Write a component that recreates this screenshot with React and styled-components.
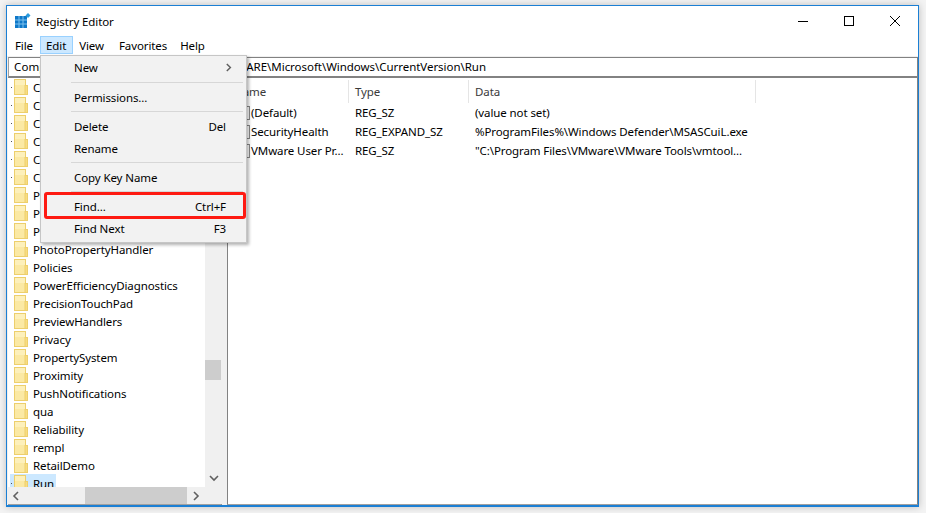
import React from "react";
import styled, { createGlobalStyle } from "styled-components";

const Global = createGlobalStyle`
  html, body { margin: 0; padding: 0; width: 926px; height: 513px; overflow: hidden; background: #f3f3f3; }
  #root { width: 926px; height: 513px; }
  * { box-sizing: border-box; }
`;

const Stage = styled.div`
  width: 926px;
  height: 513px;
  padding: 5px 7px 6px 6px;
  font-family: "Noto Sans", "Open Sans", sans-serif;
  font-size: 11.5px;
  letter-spacing: -0.1px;
  color: #000;
`;

const Win = styled.div`
  position: relative;
  width: 100%;
  height: 100%;
  display: flex;
  flex-direction: column;
  background: #fff;
  border: 1px solid #1b7fd4;
  border-bottom-width: 2px;
  box-shadow: 0 0 7px rgba(0,0,0,.22);
`;

const TitleBar = styled.div`
  height: 30px;
  flex: none;
  display: flex;
  align-items: center;
  padding-left: 8px;
`;

const TitleText = styled.span`
  margin-left: 5px;
`;

const WinButtons = styled.div`
  margin-left: auto;
  display: flex;
  align-items: center;
`;

const WinButton = styled.div`
  width: 46px;
  height: 30px;
  display: flex;
  align-items: center;
  justify-content: center;
`;

const MenuBar = styled.div`
  height: 19px;
  flex: none;
  display: flex;
  padding-left: 1.5px;
`;

const MenuItem = styled.div`
  height: 18px;
  padding: 0 6.5px;
  margin-left: ${p => p.$gap || 0}px;
  display: flex;
  align-items: center;
  background: ${p => (p.$active ? "#cce8ff" : "transparent")};
  outline: ${p => (p.$active ? "1px solid #99d1ff" : "none")};
  outline-offset: -1px;
`;

const AddressBar = styled.div`
  height: 22px;
  flex: none;
  margin-top: 1px;
  background: #f0f0f0;
  padding-top: 1px;
  display: flex;
`;

const AddressField = styled.div`
  flex: 1;
  margin-left: 1px;
  background: #fff;
  border: 1px solid #828282;
  border-width: 1px 1px 2px 1px;
  border-left-color: #a0a0a0;
  padding-left: 5px;
  line-height: 17px;
  white-space: nowrap;
  overflow: hidden;
  letter-spacing: -0.04px;
`;

const AddressHead = styled.span`
  letter-spacing: 0.13px;
`;

const Panes = styled.div`
  flex: 1;
  min-height: 0;
  display: flex;
  background: #f0f0f0;
  padding-left: 1px;
`;

const TreePane = styled.div`
  width: 214px;
  flex: none;
  display: grid;
  grid-template-columns: 197px 17px;
  grid-template-rows: 1fr 17px;
  border-right: 1px solid #828282;
  border-bottom: 1px solid #a0a0a0;
  background: #f0f0f0;
`;

const TreeList = styled.div`
  background: #fff;
  overflow: hidden;
  padding: 0 0 0 2px;
`;

const TreeRow = styled.div`
  height: 18px;
  display: flex;
  align-items: center;
  position: relative;
  white-space: nowrap;
`;

const Dot = styled.i`
  position: absolute;
  left: 1px;
  top: 9px;
  width: 1px;
  height: 1px;
  background: #555;
`;

const TreeLabel = styled.span`
  margin-left: 5px;
`;

const RowWrap = styled.div`
  display: flex;
  align-items: center;
  height: 18px;
  padding-left: 4px;
  padding-right: 2px;
  background: ${p => (p.$selected ? "#cce8ff" : "transparent")};
`;

const VBar = styled.div`
  background: #f0f0f0;
  display: flex;
  flex-direction: column;
  position: relative;
`;

const VThumb = styled.div`
  position: absolute;
  left: 0;
  right: 1px;
  top: 282px;
  height: 20px;
  background: #cdcdcd;
`;

const ArrowSlot = styled.div`
  width: 17px;
  height: 17px;
  display: flex;
  align-items: center;
  justify-content: center;
  margin-top: ${p => (p.$end ? "auto" : 0)};
  margin-left: ${p => (p.$end ? "auto" : 0)};
`;

const HBar = styled.div`
  background: #f0f0f0;
  display: flex;
  position: relative;
`;

const HThumb = styled.div`
  position: absolute;
  left: 77px;
  top: 0;
  bottom: 0;
  width: 102px;
  background: #cdcdcd;
`;

const Corner = styled.div`
  background: #f0f0f0;
`;

const Splitter = styled.div`
  width: 5px;
  flex: none;
`;

const ListPane = styled.div`
  flex: 1;
  background: #fff;
  border-left: 1px solid #828282;
  border-bottom: 1px solid #a0a0a0;
  border-right: 1px solid #828282;
`;

const ListGrid = styled.div`
  display: grid;
  grid-template-columns: 121px 120px 287px;
  padding-top: 2px;
`;

const HeadCell = styled.div`
  height: 23px;
  padding-left: 6px;
  display: flex;
  align-items: center;
  border-right: 1px solid #e5e5e5;
  color: #3a3a3a;
`;

const ListRow = styled.div`
  display: grid;
  grid-column: 1 / -1;
  grid-template-columns: subgrid;
  height: 19px;
  align-items: center;
  white-space: nowrap;
`;

const Cell = styled.div`
  padding-left: 6px;
  display: flex;
  align-items: center;
  overflow: hidden;
`;

const NameCell = styled(Cell)`
  gap: 1px;
`;

const Menu = styled.div`
  position: absolute;
  left: 33px;
  top: 49px;
  width: 207px;
  height: 188px;
  background: #f2f2f2;
  border: 1px solid #c6c6c6;
  box-shadow: 2px 2px 3px rgba(0,0,0,.3);
  padding: 0 2px;
  z-index: 5;
`;

const MenuRow = styled.div`
  height: 22px;
  display: flex;
  align-items: center;
  padding-left: 31px;
  padding-right: ${p => p.$pr || 18}px;
  justify-content: space-between;
`;

const Sep = styled.div`
  height: 1px;
  margin: ${p => p.$m || "3px 1px 3px 28px"};
  background: #d7d7d7;
`;

const FindBox = styled.div`
  position: absolute;
  left: 3px;
  top: 136px;
  width: 202px;
  height: 27px;
  border: 3px solid #fe1a12;
  border-radius: 3px;
  pointer-events: none;
`;

const AppIcon = () => (
  <svg width="16" height="16" viewBox="0 0 16 16" style={{ flex: "none" }}>
    <rect x="0" y="3" width="12" height="12" fill="#0f78c8" />
    <path d="M4 3v12M8 3v12M0 7h12M0 11h12" stroke="#7cc1ee" strokeWidth="1" />
    <path d="M13 0l2.5 2.5L13 5l-2.5-2.5z" fill="#2b9bdd" />
  </svg>
);

const Folder = () => (
  <svg width="14" height="17" viewBox="0 0 14 17" style={{ flex: "none" }}>
    <rect x="0.5" y="0.5" width="11" height="15" fill="#fbe9a4" stroke="#edcf6c" />
    <rect x="11" y="6.5" width="2.5" height="9" fill="#f8dd83" stroke="#edcf6c" />
    <rect x="1" y="1" width="10" height="5" fill="#fdf0bb" />
  </svg>
);

const ValueIcon = () => (
  <svg width="16" height="16" viewBox="0 0 16 16" style={{ flex: "none" }}>
    <rect x="2.5" y="1.5" width="13" height="13" fill="#fff" stroke="#8a8a8a" />
    <text x="4" y="11" fontSize="7" fontFamily="Liberation Sans" fill="#c33">ab</text>
  </svg>
);

const Chevron = ({ dir, size = 10 }) => {
  const d = { up: "M1 6l4-4 4 4", down: "M1 2l4 4 4-4", left: "M6 1L2 5l4 4", right: "M2 1l4 4-4 4" }[dir];
  return (
    <svg width={size} height={size} viewBox="0 0 10 10">
      <path d={d} fill="none" stroke="#606060" strokeWidth="1.6" />
    </svg>
  );
};

const tree = [
  ["Component Based Servicing", 1], ["Control Panel", 1], ["Controls Folder", 1], ["CSC", 1], ["CloudStore", 1], ["Communications", 1],
  ["Parental Controls", 0], ["PerceptionSimulation", 0], ["Personalization", 0],
  ["PhotoPropertyHandler", 0], ["Policies", 0], ["PowerEfficiencyDiagnostics", 0], ["PrecisionTouchPad", 0], ["PreviewHandlers", 0],
  ["Privacy", 0], ["PropertySystem", 0], ["Proximity", 0], ["PushNotifications", 0], ["qua", 0], ["Reliability", 0], ["rempl", 0], ["RetailDemo", 0], ["Run", 1],
];

const values = [
  ["(Default)", "REG_SZ", "(value not set)"],
  ["SecurityHealth", "REG_EXPAND_SZ", "%ProgramFiles%\\Windows Defender\\MSASCuiL.exe"],
  ["VMware User Pr...", "REG_SZ", "\"C:\\Program Files\\VMware\\VMware Tools\\vmtool..."],
];

export default function App() {
  return (
    <Stage>
      <Global />
      <Win>
        <TitleBar>
          <AppIcon />
          <TitleText>Registry Editor</TitleText>
          <WinButtons>
            <WinButton>
              <svg width="10" height="10" viewBox="0 0 10 10"><path d="M0 5.5h10" stroke="#000" /></svg>
            </WinButton>
            <WinButton>
              <svg width="10" height="10" viewBox="0 0 10 10"><rect x=".5" y=".5" width="9" height="9" fill="none" stroke="#000" /></svg>
            </WinButton>
            <WinButton>
              <svg width="10" height="10" viewBox="0 0 10 10"><path d="M0 0l10 10M10 0L0 10" stroke="#000" /></svg>
            </WinButton>
          </WinButtons>
        </TitleBar>
        <MenuBar>
          <MenuItem>File</MenuItem>
          <MenuItem $active>Edit</MenuItem>
          <MenuItem>View</MenuItem>
          <MenuItem $gap={2}>Favorites</MenuItem>
          <MenuItem>Help</MenuItem>
        </MenuBar>
        <AddressBar>
          <AddressField>
            <AddressHead>Computer\HKEY_LOCAL_MACHINE\SOFTW</AddressHead>ARE\Microsoft\Windows\CurrentVersion\Run
          </AddressField>
        </AddressBar>
        <Panes>
          <TreePane>
            <TreeList>
              {tree.map(([name, dot]) => (
                <TreeRow key={name}>
                  {dot ? <Dot /> : null}
                  <RowWrap $selected={name === "Run"}>
                    <Folder />
                    <TreeLabel>{name}</TreeLabel>
                  </RowWrap>
                </TreeRow>
              ))}
            </TreeList>
            <VBar>
              <ArrowSlot><Chevron dir="up" /></ArrowSlot>
              <VThumb />
              <ArrowSlot $end><Chevron dir="down" /></ArrowSlot>
            </VBar>
            <HBar>
              <ArrowSlot><Chevron dir="left" /></ArrowSlot>
              <HThumb />
              <ArrowSlot $end><Chevron dir="right" /></ArrowSlot>
            </HBar>
            <Corner />
          </TreePane>
          <Splitter />
          <ListPane>
            <ListGrid>
              <HeadCell>Name</HeadCell>
              <HeadCell>Type</HeadCell>
              <HeadCell>Data</HeadCell>
              {values.map(([n, t, d]) => (
                <ListRow key={n}>
                  <NameCell><ValueIcon />{n}</NameCell>
                  <Cell>{t}</Cell>
                  <Cell>{d}</Cell>
                </ListRow>
              ))}
            </ListGrid>
          </ListPane>
        </Panes>
        <Menu>
          <MenuRow $pr={10}>New<Chevron dir="right" size={9} /></MenuRow>
          <Sep $m="4px 1px 3px 28px" />
          <MenuRow>Permissions...</MenuRow>
          <Sep />
          <MenuRow>Delete<span>Del</span></MenuRow>
          <MenuRow>Rename</MenuRow>
          <Sep />
          <MenuRow>Copy Key Name</MenuRow>
          <Sep />
          <MenuRow>Find...<span>Ctrl+F</span></MenuRow>
          <MenuRow>Find Next<span>F3</span></MenuRow>
          <FindBox />
        </Menu>
      </Win>
    </Stage>
  );
}
